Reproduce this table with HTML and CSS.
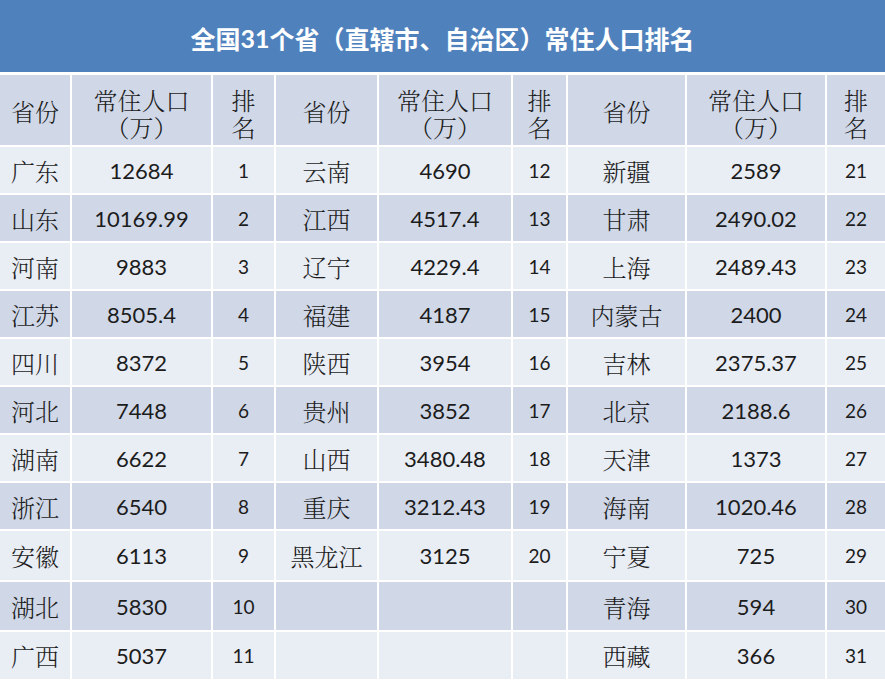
FILE: index.html
```html
<!DOCTYPE html>
<html lang="zh-CN">
<head>
<meta charset="utf-8">
<title>全国31个省（直辖市、自治区）常住人口排名</title>
<link rel="stylesheet" href="styles.css">
</head>
<body>
<div class="sheet">
  <h1 class="title">全国<span class="num">31</span>个省（直辖市、自治区）常住人口排名</h1>
  <div class="table">
    <div class="row head">
      <div class="cell zh">省份</div><div class="cell zh two">常住人口<br>（万）</div><div class="cell zh two">排<br>名</div>
      <div class="cell zh">省份</div><div class="cell zh two">常住人口<br>（万）</div><div class="cell zh two">排<br>名</div>
      <div class="cell zh">省份</div><div class="cell zh two">常住人口<br>（万）</div><div class="cell zh two">排<br>名</div>
    </div>
    <div class="row light">
      <div class="cell zh">广东</div><div class="cell num">12684</div><div class="cell rank">1</div>
      <div class="cell zh">云南</div><div class="cell num">4690</div><div class="cell rank">12</div>
      <div class="cell zh">新疆</div><div class="cell num">2589</div><div class="cell rank">21</div>
    </div>
    <div class="row dark">
      <div class="cell zh">山东</div><div class="cell num">10169.99</div><div class="cell rank">2</div>
      <div class="cell zh">江西</div><div class="cell num">4517.4</div><div class="cell rank">13</div>
      <div class="cell zh">甘肃</div><div class="cell num">2490.02</div><div class="cell rank">22</div>
    </div>
    <div class="row light">
      <div class="cell zh">河南</div><div class="cell num">9883</div><div class="cell rank">3</div>
      <div class="cell zh">辽宁</div><div class="cell num">4229.4</div><div class="cell rank">14</div>
      <div class="cell zh">上海</div><div class="cell num">2489.43</div><div class="cell rank">23</div>
    </div>
    <div class="row dark">
      <div class="cell zh">江苏</div><div class="cell num">8505.4</div><div class="cell rank">4</div>
      <div class="cell zh">福建</div><div class="cell num">4187</div><div class="cell rank">15</div>
      <div class="cell zh">内蒙古</div><div class="cell num">2400</div><div class="cell rank">24</div>
    </div>
    <div class="row light">
      <div class="cell zh">四川</div><div class="cell num">8372</div><div class="cell rank">5</div>
      <div class="cell zh">陕西</div><div class="cell num">3954</div><div class="cell rank">16</div>
      <div class="cell zh">吉林</div><div class="cell num">2375.37</div><div class="cell rank">25</div>
    </div>
    <div class="row dark">
      <div class="cell zh">河北</div><div class="cell num">7448</div><div class="cell rank">6</div>
      <div class="cell zh">贵州</div><div class="cell num">3852</div><div class="cell rank">17</div>
      <div class="cell zh">北京</div><div class="cell num">2188.6</div><div class="cell rank">26</div>
    </div>
    <div class="row light">
      <div class="cell zh">湖南</div><div class="cell num">6622</div><div class="cell rank">7</div>
      <div class="cell zh">山西</div><div class="cell num">3480.48</div><div class="cell rank">18</div>
      <div class="cell zh">天津</div><div class="cell num">1373</div><div class="cell rank">27</div>
    </div>
    <div class="row dark">
      <div class="cell zh">浙江</div><div class="cell num">6540</div><div class="cell rank">8</div>
      <div class="cell zh">重庆</div><div class="cell num">3212.43</div><div class="cell rank">19</div>
      <div class="cell zh">海南</div><div class="cell num">1020.46</div><div class="cell rank">28</div>
    </div>
    <div class="row light tall">
      <div class="cell zh">安徽</div><div class="cell num">6113</div><div class="cell rank">9</div>
      <div class="cell zh">黑龙江</div><div class="cell num">3125</div><div class="cell rank">20</div>
      <div class="cell zh">宁夏</div><div class="cell num">725</div><div class="cell rank">29</div>
    </div>
    <div class="row dark mid">
      <div class="cell zh">湖北</div><div class="cell num">5830</div><div class="cell rank">10</div>
      <div class="cell"></div><div class="cell"></div><div class="cell"></div>
      <div class="cell zh">青海</div><div class="cell num">594</div><div class="cell rank">30</div>
    </div>
    <div class="row light last">
      <div class="cell zh">广西</div><div class="cell num">5037</div><div class="cell rank">11</div>
      <div class="cell"></div><div class="cell"></div><div class="cell"></div>
      <div class="cell zh">西藏</div><div class="cell num">366</div><div class="cell rank">31</div>
    </div>
  </div>
</div>
</body>
</html>
```

FILE: styles.css
```css
html, body {
  margin: 0;
  padding: 0;
  background: #ffffff;
}

.sheet {
  width: 885px;
  height: 682px;
  display: flex;
  flex-direction: column;
  gap: 3px;
  overflow: hidden;
}

.title {
  margin: 0;
  height: 72px;
  box-sizing: border-box;
  padding-top: 4px;
  background: #4f81bd;
  color: #ffffff;
  font-family: "Noto Sans CJK SC", sans-serif;
  font-weight: 700;
  font-size: 25px;
  display: flex;
  align-items: center;
  justify-content: center;
  letter-spacing: 0;
}

.title .num {
  font-family: "Lato", "Noto Sans CJK SC", sans-serif;
  font-weight: 700;
}

.table {
  display: flex;
  flex-direction: column;
  gap: 2px;
}

.row {
  display: grid;
  grid-template-columns: 70px 139px 61px 101px 132px 53px 117px 138px 1fr;
  column-gap: 2px;
  height: 46px;
}

.row.head { height: 70px; }
.row.tall { height: 49px; }
.row.mid { height: 48px; }
.row.last { height: 47px; }

.row.head .cell,
.row.dark .cell { background: #d0d8e8; }
.row.light .cell { background: #e9edf4; }

.cell {
  display: flex;
  align-items: center;
  justify-content: center;
  text-align: center;
  color: #1c1c1c;
}

.cell.zh {
  font-family: "Noto Serif CJK SC", "Noto Sans CJK SC", serif;
  font-weight: 300;
  font-size: 24px;
  line-height: 27px;
}

.cell.two {
  padding-top: 6px;
  box-sizing: border-box;
}

.cell.num {
  font-family: "Lato", "Liberation Sans", sans-serif;
  font-size: 22px;
}

.cell.rank {
  font-family: "Lato", "Liberation Sans", sans-serif;
  font-size: 19px;
}
```
